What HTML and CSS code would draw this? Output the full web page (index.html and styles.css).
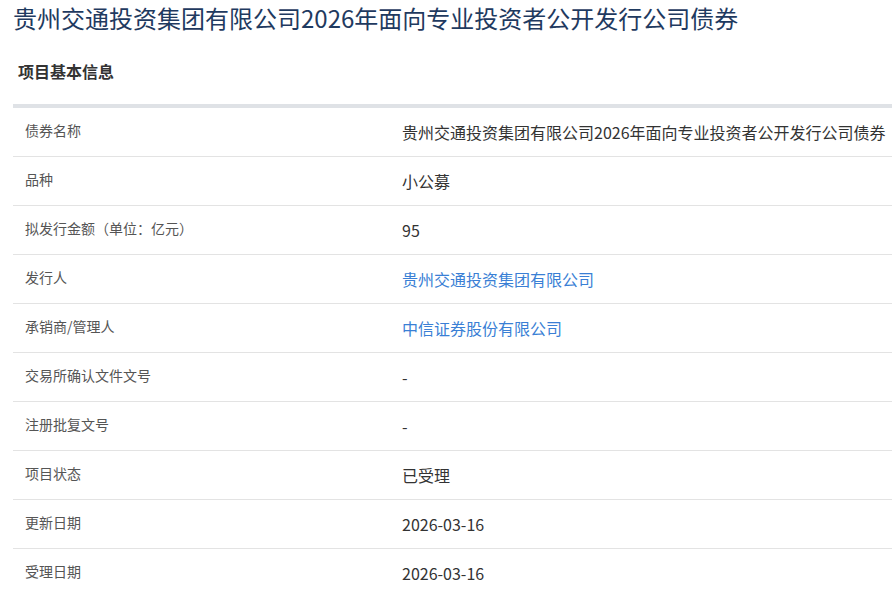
FILE: index.html
```html
<!DOCTYPE html>
<html lang="zh-CN">
<head>
<meta charset="utf-8">
<title>贵州交通投资集团有限公司2026年面向专业投资者公开发行公司债券</title>
<link rel="stylesheet" href="styles.css">
</head>
<body>
<div class="page">
  <h1 class="title">贵州交通投资集团有限公司2026年面向专业投资者公开发行公司债券</h1>
  <h2 class="section">项目基本信息</h2>
  <div class="info">
    <div class="row"><div class="label">债券名称</div><div class="value">贵州交通投资集团有限公司2026年面向专业投资者公开发行公司债券</div></div>
    <div class="row"><div class="label">品种</div><div class="value">小公募</div></div>
    <div class="row"><div class="label">拟发行金额（单位：亿元）</div><div class="value">95</div></div>
    <div class="row"><div class="label">发行人</div><div class="value"><a class="link" href="#">贵州交通投资集团有限公司</a></div></div>
    <div class="row"><div class="label">承销商/管理人</div><div class="value"><a class="link" href="#">中信证券股份有限公司</a></div></div>
    <div class="row"><div class="label">交易所确认文件文号</div><div class="value">-</div></div>
    <div class="row"><div class="label">注册批复文号</div><div class="value">-</div></div>
    <div class="row"><div class="label">项目状态</div><div class="value">已受理</div></div>
    <div class="row"><div class="label">更新日期</div><div class="value">2026-03-16</div></div>
    <div class="row"><div class="label">受理日期</div><div class="value">2026-03-16</div></div>
  </div>
</div>
</body>
</html>
```
FILE: styles.css
```css
html, body {
  margin: 0;
  padding: 0;
  background: #ffffff;
  overflow: hidden;
}
body {
  font-family: "Noto Sans CJK SC", "Noto Sans", sans-serif;
  color: #333333;
}
.page {
  padding-left: 13px;
}
.title {
  margin: 0;
  font-size: 24px;
  font-weight: normal;
  line-height: 36px;
  color: #1f3a60;
  white-space: nowrap;
}
.section {
  margin: 0;
  padding: 23px 0 21px 5px;
  font-size: 16px;
  line-height: 24px;
  font-weight: bold;
  color: #333333;
  border-bottom: 4px solid #dfe2e6;
}
.info {
  display: flex;
  flex-direction: column;
}
.row {
  display: grid;
  grid-template-columns: 377px 1fr;
  align-items: center;
  height: 48px;
  border-bottom: 1px solid #e3e3e3;
}
.label {
  padding-left: 12px;
  padding-bottom: 4px;
  font-size: 14px;
  color: #555555;
  white-space: nowrap;
}
.value {
  padding-left: 12px;
  padding-bottom: 1px;
  font-size: 16px;
  color: #333333;
  white-space: nowrap;
}
.link {
  color: #3a7fd5;
  text-decoration: none;
}
```
